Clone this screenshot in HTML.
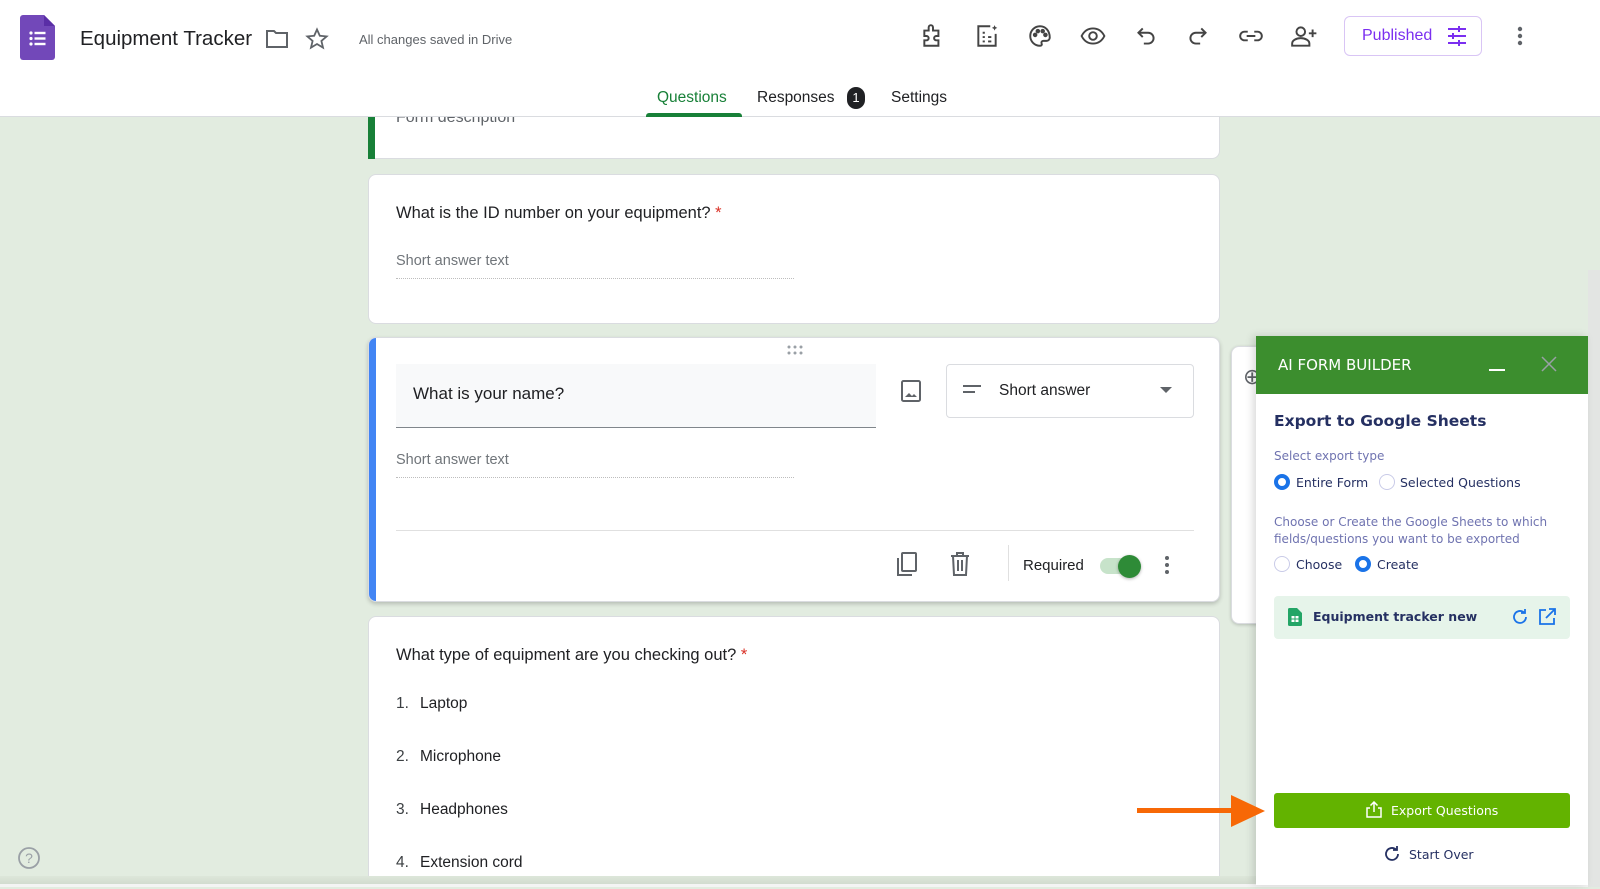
<!DOCTYPE html>
<html><head><meta charset="utf-8"><style>
*{box-sizing:border-box;margin:0;padding:0}
body{width:1600px;height:887px;overflow:hidden;background:#e2ece0;font-family:"Liberation Sans",sans-serif;position:relative;color:#202124}
.hdr{position:absolute;left:0;top:0;width:1600px;height:117px;background:#fff;border-bottom:1px solid #dadce0;z-index:5}
.abs{position:absolute}
.card{position:absolute;background:#fff;border-radius:8px;border:1px solid #dadce0}
.ic{position:absolute}
.sb{font-family:"DejaVu Sans","Liberation Sans",sans-serif}
.radio{position:absolute;width:16px;height:16px;border-radius:50%;border:1.5px solid #c9cbe8}
.radio.on{border:4px solid #1a73e8}
</style></head><body>
<div class="hdr">
  <svg class="ic" style="left:20px;top:15px" width="35" height="45" viewBox="0 0 35 45"><path d="M3 0h21l11 11v31a3 3 0 0 1-3 3H3a3 3 0 0 1-3-3V3a3 3 0 0 1 3-3z" fill="#7248b9"/><path d="M24 0l11 11H24z" fill="#5a2ea6"/><g fill="#fff"><circle cx="11" cy="18" r="1.6"/><circle cx="11" cy="23.5" r="1.6"/><circle cx="11" cy="29" r="1.6"/><rect x="14.5" y="16.8" width="11" height="2.4"/><rect x="14.5" y="22.3" width="11" height="2.4"/><rect x="14.5" y="27.8" width="11" height="2.4"/></g></svg>
  <div class="abs" style="left:80px;top:27px;font-size:20.5px;color:#202124">Equipment Tracker</div>
  <svg class="ic" style="left:265px;top:29px" width="24" height="20" viewBox="0 0 24 20"><path d="M2 2h7l2 2h11v14H2z" fill="none" stroke="#5f6368" stroke-width="2"/></svg>
  <svg class="ic" style="left:305px;top:27px" width="24" height="24" viewBox="0 0 24 24"><path d="M12 2.5l2.8 6.3 6.8.6-5.2 4.5 1.6 6.7L12 17l-6 3.6 1.6-6.7-5.2-4.5 6.8-.6z" fill="none" stroke="#5f6368" stroke-width="1.8"/></svg>
  <div class="abs" style="left:359px;top:32px;font-size:13px;color:#5f6368">All changes saved in Drive</div>
  <svg class="ic" style="left:920px;top:23px" width="26" height="26" viewBox="0 0 24 24" fill="none" stroke="#444" stroke-width="1.8"><path d="M4 7h4V4a2 2 0 0 1 4 0v3h5v5h-2a2 2 0 0 0 0 4h2v5H4v-5h2a2 2 0 0 0 0-4H4z"/></svg>
  <svg class="ic" style="left:974px;top:23px" width="26" height="26" viewBox="0 0 24 24" fill="none" stroke="#444" stroke-width="1.8"><path d="M15 3H4v18h16V10"/><path d="M8 9h2M8 13h2M8 17h2M13 13h3M13 17h3" /><path d="M19 2l.8 1.7 1.7.8-1.7.8L19 7l-.8-1.7-1.7-.8 1.7-.8z" fill="#444" stroke="none"/></svg>
  <svg class="ic" style="left:1027px;top:23px" width="26" height="26" viewBox="0 0 24 24" fill="none" stroke="#444" stroke-width="1.8"><path d="M12 3a9 9 0 0 0 0 18c1.5 0 2-1 1.5-2-.6-1.2.2-2.5 1.5-2.5H18a3 3 0 0 0 3-3C21 7 17 3 12 3z"/><circle cx="7.5" cy="11" r="1.2" fill="#444"/><circle cx="10" cy="7.5" r="1.2" fill="#444"/><circle cx="14.5" cy="7.5" r="1.2" fill="#444"/><circle cx="17" cy="11" r="1.2" fill="#444"/></svg>
  <svg class="ic" style="left:1080px;top:23px" width="26" height="26" viewBox="0 0 24 24" fill="none" stroke="#444" stroke-width="1.8"><path d="M1.5 12C4 7 8 5 12 5s8 2 10.5 7C20 17 16 19 12 19s-8-2-10.5-7z"/><circle cx="12" cy="12" r="3.5"/></svg>
  <svg class="ic" style="left:1133px;top:23px" width="26" height="26" viewBox="0 0 24 24" fill="none" stroke="#444" stroke-width="1.8"><path d="M9 5L5 9l4 4"/><path d="M5 9h9a5 5 0 0 1 0 10h-4"/></svg>
  <svg class="ic" style="left:1185px;top:23px" width="26" height="26" viewBox="0 0 24 24" fill="none" stroke="#444" stroke-width="1.8"><path d="M15 5l4 4-4 4"/><path d="M19 9h-9a5 5 0 0 0 0 10h4"/></svg>
  <svg class="ic" style="left:1238px;top:23px" width="26" height="26" viewBox="0 0 24 24" fill="none" stroke="#444" stroke-width="1.8"><path d="M9 8H6a4 4 0 0 0 0 8h3M15 8h3a4 4 0 0 1 0 8h-3M8 12h8"/></svg>
  <svg class="ic" style="left:1290px;top:23px" width="28" height="26" viewBox="0 0 26 24" fill="none" stroke="#444" stroke-width="1.8"><circle cx="10" cy="8" r="4"/><path d="M2 21v-2c0-3 4-5 8-5s8 2 8 5v2z"/><path d="M21 6v7M17.5 9.5h7"/></svg>
  <div class="abs" style="left:1344px;top:16px;width:138px;height:40px;border:1px solid #d9c5f5;border-radius:6px"></div>
  <div class="abs" style="left:1362px;top:27px;font-size:16px;color:#7b2ff0">Published</div>
  <svg class="ic" style="left:1446px;top:25px" width="22" height="22" viewBox="0 0 22 22" stroke="#7b2ff0" stroke-width="2"><path d="M2 4h18M2 11h18M2 18h18"/><path d="M13 1v6M7 8v6M13 15v6"/></svg>
  <svg class="ic" style="left:1517px;top:25px" width="6" height="22"><circle cx="3" cy="4" r="2.2" fill="#5f6368"/><circle cx="3" cy="11" r="2.2" fill="#5f6368"/><circle cx="3" cy="18" r="2.2" fill="#5f6368"/></svg>
  <div class="abs" style="left:657px;top:89px;font-size:15.5px;color:#188038">Questions</div>
  <div class="abs" style="left:646px;top:113px;width:96px;height:4px;background:#188038;border-radius:3px 3px 0 0"></div>
  <div class="abs" style="left:757px;top:89px;font-size:15.5px;color:#202124">Responses</div>
  <div class="abs" style="left:847px;top:87px;width:18px;height:22px;border-radius:9px;background:#202124;color:#fff;font-size:13px;text-align:center;line-height:22px">1</div>
  <div class="abs" style="left:891px;top:89px;font-size:15.5px;color:#202124">Settings</div>
</div>

<!-- card 0 -->
<div class="card" style="left:368px;top:100px;width:852px;height:59px;border-top:none;border-radius:0 0 8px 8px"></div>
<div class="abs" style="left:368px;top:117px;width:7px;height:42px;background:#188038"></div>
<div class="abs" style="left:396px;top:109px;font-size:16px;color:#5f6368">Form description</div>

<!-- card 1 -->
<div class="card" style="left:368px;top:174px;width:852px;height:150px"></div>
<div class="abs" style="left:396px;top:204px;font-size:16.5px">What is the ID number on your equipment? <span style="color:#d93025">*</span></div>
<div class="abs" style="left:396px;top:253px;font-size:14.5px;color:#70757a">Short answer text</div>
<div class="abs" style="left:396px;top:278px;width:398px;border-top:1px dotted #bdbdbd"></div>

<!-- card 2 -->
<div class="card" style="left:368px;top:337px;width:852px;height:265px;box-shadow:0 2px 4px rgba(0,0,0,.2);overflow:hidden"><div style="position:absolute;left:0;top:0;width:7px;height:100%;background:#4285f4"></div></div>
<svg class="ic" style="left:787px;top:345px" width="18" height="10"><g fill="#9aa0a6"><circle cx="2" cy="2" r="1.5"/><circle cx="8" cy="2" r="1.5"/><circle cx="14" cy="2" r="1.5"/><circle cx="2" cy="8" r="1.5"/><circle cx="8" cy="8" r="1.5"/><circle cx="14" cy="8" r="1.5"/></g></svg>
<div class="abs" style="left:396px;top:364px;width:480px;height:64px;background:#f8f9fa;border-bottom:1px solid #80868b"></div>
<div class="abs" style="left:413px;top:384px;font-size:17px">What is your name?</div>
<svg class="ic" style="left:900px;top:380px" width="22" height="22" viewBox="0 0 22 22"><rect x="2" y="1" width="18" height="20" rx="1.5" fill="none" stroke="#5f6368" stroke-width="2"/><path d="M5 17l4-4 3 3 2-2 3 3z" fill="#5f6368"/></svg>
<div class="abs" style="left:946px;top:364px;width:248px;height:54px;border:1px solid #dadce0;border-radius:4px"></div>
<svg class="ic" style="left:963px;top:383px" width="20" height="14"><rect x="0" y="2" width="18" height="2" fill="#5f6368"/><rect x="0" y="8" width="12" height="2" fill="#5f6368"/></svg>
<div class="abs" style="left:999px;top:382px;font-size:15.5px">Short answer</div>
<svg class="ic" style="left:1160px;top:387px" width="12" height="8"><path d="M0 0h12L6 6z" fill="#5f6368"/></svg>
<div class="abs" style="left:396px;top:452px;font-size:14.5px;color:#70757a">Short answer text</div>
<div class="abs" style="left:396px;top:477px;width:398px;border-top:1px dotted #bdbdbd"></div>
<div class="abs" style="left:396px;top:530px;width:798px;height:1px;background:#e0e0e0"></div>
<svg class="ic" style="left:896px;top:552px" width="22" height="26" viewBox="0 0 22 26" fill="none" stroke="#5f6368" stroke-width="2"><rect x="6" y="1" width="14" height="18" rx="1"/><path d="M2 6v17h14"/></svg>
<svg class="ic" style="left:950px;top:552px" width="20" height="24" viewBox="0 0 20 24" fill="none" stroke="#5f6368" stroke-width="2"><path d="M1 4h18M7 4V1h6v3M3 4l1 19h12l1-19M8 8v11M12 8v11"/></svg>
<div class="abs" style="left:1008px;top:545px;width:1px;height:36px;background:#e0e0e0"></div>
<div class="abs" style="left:1023px;top:557px;font-size:15px">Required</div>
<div class="abs" style="left:1100px;top:558px;width:40px;height:16px;border-radius:8px;background:#c7e3ca"></div>
<div class="abs" style="left:1118px;top:555px;width:23px;height:23px;border-radius:50%;background:#2e8b37;box-shadow:0 1px 3px rgba(0,0,0,.3)"></div>
<svg class="ic" style="left:1164px;top:555px" width="6" height="20"><circle cx="3" cy="3" r="2" fill="#5f6368"/><circle cx="3" cy="10" r="2" fill="#5f6368"/><circle cx="3" cy="17" r="2" fill="#5f6368"/></svg>

<!-- card 3 -->
<div class="card" style="left:368px;top:616px;width:852px;height:262px;border-radius:8px 8px 0 0"></div>
<div class="abs" style="left:396px;top:646px;font-size:16.5px">What type of equipment are you checking out? <span style="color:#d93025">*</span></div>
<div class="abs" style="left:396px;top:677px;font-size:15.5px;line-height:53px">
<div><span style="display:inline-block;width:24px;color:#3c4043">1.</span>Laptop</div>
<div><span style="display:inline-block;width:24px;color:#3c4043">2.</span>Microphone</div>
<div><span style="display:inline-block;width:24px;color:#3c4043">3.</span>Headphones</div>
<div><span style="display:inline-block;width:24px;color:#3c4043">4.</span>Extension cord</div>
</div>

<!-- side toolbar -->
<div class="card" style="left:1231px;top:346px;width:60px;height:278px;box-shadow:0 1px 3px rgba(0,0,0,.2)"></div>
<div class="abs" style="left:1243px;top:364px;font-size:22px;color:#5f6368">⊕</div>

<div class="abs" style="left:0;top:876px;width:1600px;height:8px;background:linear-gradient(#dde7da,#d2dbcf)"></div>
<div class="abs" style="left:0;top:884px;width:1600px;height:3px;background:#f4f4f4"></div>
<svg class="ic" style="left:17px;top:846px" width="24" height="24" viewBox="0 0 24 24"><circle cx="12" cy="12" r="10" fill="none" stroke="#9aa0a6" stroke-width="1.8"/><text x="12" y="17" text-anchor="middle" font-size="14" fill="#9aa0a6" font-family="Liberation Sans">?</text></svg>

<div class="abs" style="left:1588px;top:270px;width:12px;height:617px;background:#e3e5e3"></div>

<!-- AI panel -->
<div class="abs" style="left:1256px;top:336px;width:332px;height:549px;background:#fff;box-shadow:-3px 0 8px rgba(0,0,0,.15)"></div>
<div class="abs" style="left:1256px;top:336px;width:332px;height:58px;background:#3c8e2e"></div>
<div class="abs sb" style="left:1278px;top:356px;font-size:15px;color:#fff">AI FORM BUILDER</div>
<div class="abs" style="left:1489px;top:369px;width:16px;height:2px;background:#fff"></div>
<svg class="ic" style="left:1541px;top:356px" width="16" height="16"><path d="M1 1l14 14M15 1L1 15" stroke="#9aa0a6" stroke-width="1.5"/></svg>
<div class="abs sb" style="left:1274px;top:412px;font-size:15.5px;font-weight:bold;color:#253062">Export to Google Sheets</div>
<div class="abs sb" style="left:1274px;top:449px;font-size:12px;color:#6f73b0">Select export type</div>
<div class="radio on" style="left:1274px;top:474px"></div>
<div class="abs sb" style="left:1296px;top:475px;font-size:12.5px;color:#253062">Entire Form</div>
<div class="radio" style="left:1379px;top:474px"></div>
<div class="abs sb" style="left:1400px;top:475px;font-size:12.5px;color:#253062">Selected Questions</div>
<div class="abs sb" style="left:1274px;top:514px;font-size:12px;color:#6f73b0;line-height:17px;width:300px">Choose or Create the Google Sheets to which fields/questions you want to be exported</div>
<div class="radio" style="left:1274px;top:556px"></div>
<div class="abs sb" style="left:1296px;top:557px;font-size:12.5px;color:#253062">Choose</div>
<div class="radio on" style="left:1355px;top:556px"></div>
<div class="abs sb" style="left:1377px;top:557px;font-size:12.5px;color:#253062">Create</div>
<div class="abs" style="left:1274px;top:596px;width:296px;height:43px;background:#e6f4ea;border-radius:4px"></div>
<svg class="ic" style="left:1288px;top:608px" width="14" height="18" viewBox="0 0 14 18"><path d="M0 1.5A1.5 1.5 0 0 1 1.5 0H9l5 5v11.5A1.5 1.5 0 0 1 12.5 18h-11A1.5 1.5 0 0 1 0 16.5z" fill="#23a566"/><rect x="3.5" y="8" width="7" height="6" fill="#fff"/><path d="M3.5 11h7M7 8v6" stroke="#23a566" stroke-width="1"/></svg>
<div class="abs sb" style="left:1313px;top:609px;font-size:12.5px;font-weight:bold;color:#253062">Equipment tracker new</div>
<svg class="ic" style="left:1511px;top:608px" width="18" height="18" viewBox="0 0 18 18" fill="none" stroke="#1a73e8" stroke-width="1.8"><path d="M15 9a6 6 0 1 1-2-4.5"/><path d="M14 1v4h-4"/></svg>
<svg class="ic" style="left:1538px;top:608px" width="18" height="18" viewBox="0 0 18 18" fill="none" stroke="#1a73e8" stroke-width="1.8"><path d="M8 2H2v14h14v-6M11 1h6v6M17 1L8 10"/></svg>
<div class="abs" style="left:1274px;top:793px;width:296px;height:35px;background:#63b300;border-radius:3px"></div>
<svg class="ic" style="left:1366px;top:801px" width="16" height="17" viewBox="0 0 16 17" fill="none" stroke="#fff" stroke-width="1.5"><path d="M4 7H1v9h14V7h-3M8 11V1M4.5 4.5L8 1l3.5 3.5"/></svg>
<div class="abs sb" style="left:1391px;top:803px;font-size:12.5px;color:#fff">Export Questions</div>
<svg class="ic" style="left:1383px;top:845px" width="18" height="18" viewBox="0 0 18 18" fill="none" stroke="#253062" stroke-width="1.8"><path d="M15 9a6 6 0 1 1-2-4.5"/><path d="M14 1v4h-4"/></svg>
<div class="abs sb" style="left:1409px;top:847px;font-size:12.5px;color:#253062">Start Over</div>

<!-- arrow -->
<div class="abs" style="left:1137px;top:808px;width:100px;height:5px;background:#f76806"></div>
<svg class="ic" style="left:1231px;top:795px" width="34" height="32"><path d="M0 0L34 16 0 32z" fill="#f76806"/></svg>
</body></html>
